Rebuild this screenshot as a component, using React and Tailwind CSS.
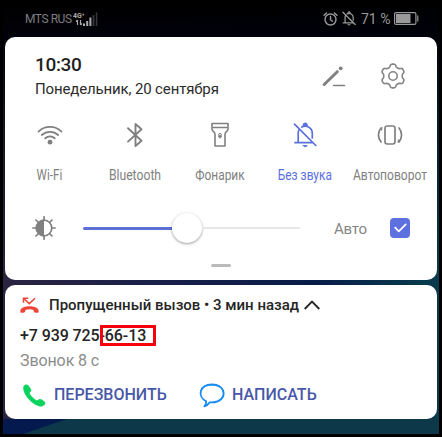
import React from "react";

function BellOff({ className, strokeWidth = 1.5 }) {
  return (
    <svg viewBox="0 0 24 26" className={className} fill="none" stroke="currentColor" strokeWidth={strokeWidth} strokeLinecap="round">
      <path d="M1.500 2.200 22.800 23.500M5.200 20.500V10.800c0-1.200.3-2.300.9-3.200M2 20.700h17.600M8.800 5.100c4.800-2.300 10.500.4 10.500 6.200v4.700" />
      <path d="M10 3.100a2.200 2.200 0 0 1 4.400 0ZM10.300 23.600h3.800c-.5 1.400-3.300 1.400-3.800 0Z" fill="currentColor" strokeWidth="1" />
    </svg>
  );
}

// Six-lobed outline: the radius swings between lobe and valley with flattened extremes.
const gearPath =
  Array.from({ length: 120 }, (_, i) => {
    const t = (i / 120) * Math.PI * 2;
    const r = 10.6 + 1.35 * Math.tanh(2 * Math.cos(6 * t));
    return `${i ? "L" : "M"}${(13 + r * Math.sin(t)).toFixed(2)} ${(13 - r * Math.cos(t)).toFixed(2)}`;
  }).join("") + "Z";

function StatusBar() {
  return (
    <header className="flex h-[37px] items-center pl-[22px] pr-[20px] text-[#7d7d80]">
      <span className="w-[46px] whitespace-nowrap text-[12px] leading-none tracking-[-0.45px]">MTS RUS</span>
      <svg className="ml-[2px] h-[16px] w-[26px]" viewBox="0 0 26 16">
        <text x="0" y="6.500" fontSize="7.500" fontWeight="700" fill="#aaa" fontFamily="Roboto, sans-serif" textLength="11.500" lengthAdjust="spacingAndGlyphs">4G⁺</text>
        <g fill="none" stroke="#aaa" strokeWidth="1.200">
          <path d="M4.500 9.200V14M3 10.500l1.500-1.500M7.500 9V14M7.500 14l1.500-1.500" />
        </g>
        <path d="M10 12.500h2V15h-2zM13.200 10h2v5h-2zM16.400 6.500h2V15h-2z" fill="#aaa" />
        <path d="M19.600 4h1.800v11h-1.800zM22.800 1.500h1.500V15h-1.500z" fill="#38383b" />
      </svg>
      <div className="ml-auto flex items-center text-[#9a9a9a]">
        <svg className="mr-[1px] h-[14px] w-[15px]" viewBox="0 0 15 14" fill="none" stroke="currentColor" strokeWidth="1.400" strokeLinecap="round">
          <circle cx="7.500" cy="7.500" r="5.500" />
          <path d="M7.500 4.500v3.200l2 1.500M1 3.300 3.600 1M14 3.300 11.400 1" />
        </svg>
        <BellOff className="ml-[3px] mr-[2px] h-[15px] w-[14px]" strokeWidth={2.2} />
        <span className="ml-[3px] w-[30px] whitespace-nowrap text-[14px] leading-none">71 %</span>
        <svg className="ml-[3px] h-[13px] w-[25px]" viewBox="0 0 25 13">
          <rect x=".6" y=".6" width="21.300" height="11.800" rx="1.500" fill="none" stroke="currentColor" strokeWidth="1.200" />
          <path d="M2 2h14.500v9H2z" fill="currentColor" />
          <path d="M23 3.500h1.500v6H23z" fill="#777" />
        </svg>
      </div>
    </header>
  );
}

function Tile({ label, labelClass = "", active, children }) {
  return (
    <div className={"flex w-[85px] flex-col items-center " + (active ? "text-[#5a70de]" : "text-[#808080]")}>
      <div className="flex h-[28px] items-center justify-center">{children}</div>
      <span className={"mt-[17px] whitespace-nowrap text-[14px] leading-[18px] " + labelClass}>{label}</span>
    </div>
  );
}

function QuickSettings() {
  return (
    <section className="h-[243px] rounded-[10px] bg-white">
      <div className="flex h-[84px] pl-[30px]">
        <div className="w-[200px] pt-[16px]">
          <div className="text-[19px] font-medium leading-[24px] tracking-[-0.35px] text-[#1f1f1f]">10:30</div>
          <div className="mt-[2px] whitespace-nowrap text-[15px] leading-[20px] tracking-[-0.14px] text-[#2b2b2b]">Понедельник, 20 сентября</div>
        </div>
        <svg className="ml-[87px] mt-[28px] h-[22px] w-[24px]" viewBox="0 0 24 22" stroke="#808080" fill="none" strokeLinecap="round">
          <path d="M2.200 19.500 15.300 6.700" strokeWidth="3" />
          <path d="M18.700 3.300h.01" strokeWidth="3.800" />
          <path d="M11.500 20.500h11" strokeWidth="1.500" />
        </svg>
        <svg className="ml-[34px] mt-[26px] h-[26px] w-[26px]" viewBox="0 0 26 26" stroke="#858585" fill="none" strokeWidth="1.600" strokeLinejoin="round">
          <path d={gearPath} />
          <circle cx="13" cy="13" r="4.200" />
        </svg>
      </div>

      <div className="flex pl-[2px]">
        <Tile label="Wi-Fi" labelClass="scale-x-[0.83]">
          <svg className="h-[22px] w-[26px]" viewBox="0 0 26 22" fill="none" stroke="currentColor" strokeWidth="1.800" strokeLinecap="round">
            <path d="M1.500 7.600c6.500-6.300 16.500-6.300 23 0M4.800 11c4.700-4.300 11.700-4.300 16.400 0M8.200 14.200c2.800-2.300 6.800-2.300 9.600 0" />
            <circle cx="13" cy="18.200" r="2.400" fill="currentColor" stroke="none" />
          </svg>
        </Tile>
        <Tile label="Bluetooth" labelClass="scale-x-[0.87]">
          <svg className="h-[26px] w-[18px]" viewBox="0 0 18 26" fill="none" stroke="currentColor" strokeWidth="1.900" strokeLinejoin="round" strokeLinecap="round">
            <path d="m2 6.200 13.500 12.500L9.500 24V2l6 5.200L2 19.600" />
          </svg>
        </Tile>
        <Tile label="Фонарик" labelClass="scale-x-[0.85]">
          <svg className="h-[26px] w-[18px]" viewBox="0 0 18 26" fill="none" stroke="currentColor" strokeWidth="1.600" strokeLinejoin="round">
            <path d="M1 1.500h16v5.700c0 2-3 2.500-3 5V24H4V12.200c0-2.500-3-3-3-5ZM1 5.500h16" />
            <ellipse cx="9" cy="13.600" rx="1.400" ry="2.400" strokeWidth="1" />
            <circle cx="9" cy="14.300" r="1.200" fill="currentColor" stroke="none" />
          </svg>
        </Tile>
        <Tile label="Без звука" labelClass="scale-x-[0.85]" active>
          <BellOff className="h-[26px] w-[24px]" strokeWidth={1.7} />
        </Tile>
        <Tile label="Автоповорот" labelClass="scale-x-[0.86]">
          <svg className="h-[22px] w-[26px]" viewBox="0 0 26 22" fill="none" stroke="currentColor" strokeWidth="1.700" strokeLinecap="round">
            <rect x="8" y="2" width="10" height="18" rx="2.200" />
            <path d="M4 4C.6 8 .6 14 4 18M22 18c3.400-4 3.400-10 0-14" />
            <path d="M3.400 5 4.800 3.500v2.300ZM22.600 17l-1.400 1.500v-2.300Z" fill="currentColor" strokeWidth="1" />
          </svg>
        </Tile>
      </div>

      <div className="mt-[14px] flex h-[60px] items-center pl-[27px]">
        <svg className="h-[24px] w-[24px]" viewBox="0 0 24 24" fill="none" stroke="#808080" strokeWidth="1.700" strokeLinecap="round">
          <circle cx="12" cy="12" r="7.800" />
          <path d="M12 4.200a7.800 7.800 0 0 0 0 15.600Z" fill="#808080" stroke="none" />
          <path d="M12 .8V4M12 20v3.200M.8 12H4M20 12h3.200M4 4l2 2M18 18l2 2M4 20l2-2M18 6l2-2" />
        </svg>
        <div className="ml-[27px] flex w-[217px] items-center">
          <div className="h-[3px] w-[89px] rounded-l-full bg-[#5c70d6]" />
          <div className="h-[30px] w-[30px] rounded-full bg-white shadow-[0_1px_3px_rgba(0,0,0,0.4)]" />
          <div className="h-[2px] flex-1 rounded-r-full bg-[#e6e6e6]" />
        </div>
        <span className="ml-[34px] mt-[2px] w-[56px] text-[15px] leading-none tracking-[-0.2px] text-[#858585]">Авто</span>
        <div className="flex h-[20px] w-[20px] items-center justify-center rounded-[4px] bg-[#5c70df]">
          <svg className="h-[10px] w-[13px]" viewBox="0 0 13 10" fill="none" stroke="#fff" strokeWidth="1.700" strokeLinecap="round" strokeLinejoin="round">
            <path d="m1.200 4.700 3.600 3.600L11.700 1.400" />
          </svg>
        </div>
      </div>
      <div className="mx-auto mt-[6px] h-[3px] w-[20px] rounded-full bg-[#bbb]" />
    </section>
  );
}

function MissedCall() {
  return (
    <section className="mt-[5px] h-[134px] rounded-[10px] bg-white pl-[15px]">
      <div className="flex h-[40px] items-center">
        <svg className="h-[17px] w-[19px]" viewBox="0 0 19 17" fill="none" stroke="#f04438">
          <path d="M3.500 5.800V1.200h4.800M3.500 1.200l5.800 5.400L15 1.200" strokeWidth="1.500" />
          <path d="M.4 13.200c1.600-5.400 16.600-5.400 18.200 0 .2 1.800-.1 2.600-1 2.600-3.200-.2-4-.8-4-2.900-2.500-1-5.700-1-8.200 0 0 2.100-.8 2.700-4 2.900-.9 0-1.200-.8-1-2.600Z" fill="#f04438" stroke="none" />
        </svg>
        <span className="ml-[10px] whitespace-nowrap text-[15px] font-medium leading-none text-[#252525]">Пропущенный вызов • 3 мин назад</span>
        <svg className="ml-[5px] h-[10px] w-[16px]" viewBox="0 0 16 10" fill="none" stroke="#252525" strokeWidth="1.800">
          <path d="M.7 9 8 1.500 15.300 9" />
        </svg>
      </div>
      <div className="relative h-[22px] whitespace-nowrap text-[16px] font-medium leading-[22px] tracking-[-0.1px] text-[#252525]">
        +7 939 725-66-13
        <div className="absolute left-[80px] top-0 h-[21px] w-[56px] border-[3px] border-[#f8000b]" />
      </div>
      <div className="mt-[3px] text-[16px] leading-[22px] tracking-[-0.1px] text-[#8c8c8c]">Звонок 8 с</div>
      <div className="mt-[10px] flex h-[26px] items-center text-[16px] font-medium text-[#4858a8]">
        <svg className="ml-[3px] h-[23px] w-[23px]" viewBox="0 0 23 23" fill="#0bd45e">
          <path d="M2 .8C4-.2 5.500 1 7.800 4.800 8.600 6.300 8.300 7.200 6.800 8.600 6.200 9.500 8 12 10.800 14.300 13 16.200 14 16.700 14.800 16c1.500-1.400 2.500-1.400 4-.4 3.700 2.400 4.200 3.400 3 5-1.800 2.400-4.300 2.600-8.300.7C8 18.500 3 13 1 8-.3 4.500 0 2 2 .8Z" />
        </svg>
        <span className="ml-[8px] w-[145px]">ПЕРЕЗВОНИТЬ</span>
        <svg className="h-[25px] w-[26px]" viewBox="0 0 26 25" fill="none" stroke="#168af5" strokeWidth="1.800" strokeLinejoin="round">
          <path d="M7.200 18.300C-2 13.500.2 1.700 13 1.500c15.500.2 15.500 17.500 0 17.900-.8 0-1.500 0-2.200-.1-1.300 2-3.300 3.500-5.500 4 1.300-1.300 2-3 1.900-5Z" />
        </svg>
        <span className="ml-[7px]">НАПИСАТЬ</span>
      </div>
    </section>
  );
}

export default function App() {
  return (
    <div className="h-[437px] w-[442px] overflow-hidden bg-black px-[3px] pb-[3px] font-[Roboto,'Noto_Sans',sans-serif]">
      <div className="h-[434px] bg-[linear-gradient(180deg,#000_0%,rgba(0,0,8,0.96)_9%,rgba(0,0,0,0.5)_28%,transparent_60%),linear-gradient(90deg,#2a2440_0%,#1c2048_30%,#071c48_72%,#083a4c_97%)]">
        <StatusBar />
        <main className="px-[2px]">
          <QuickSettings />
          <MissedCall />
        </main>
        <footer className="h-[15px] bg-[#0c384a]">
          <svg className="block h-[15px] w-[66px]" viewBox="0 0 66 15">
            <path d="M0 0h64L20 15H0Z" fill="#041a4e" />
          </svg>
        </footer>
      </div>
    </div>
  );
}
